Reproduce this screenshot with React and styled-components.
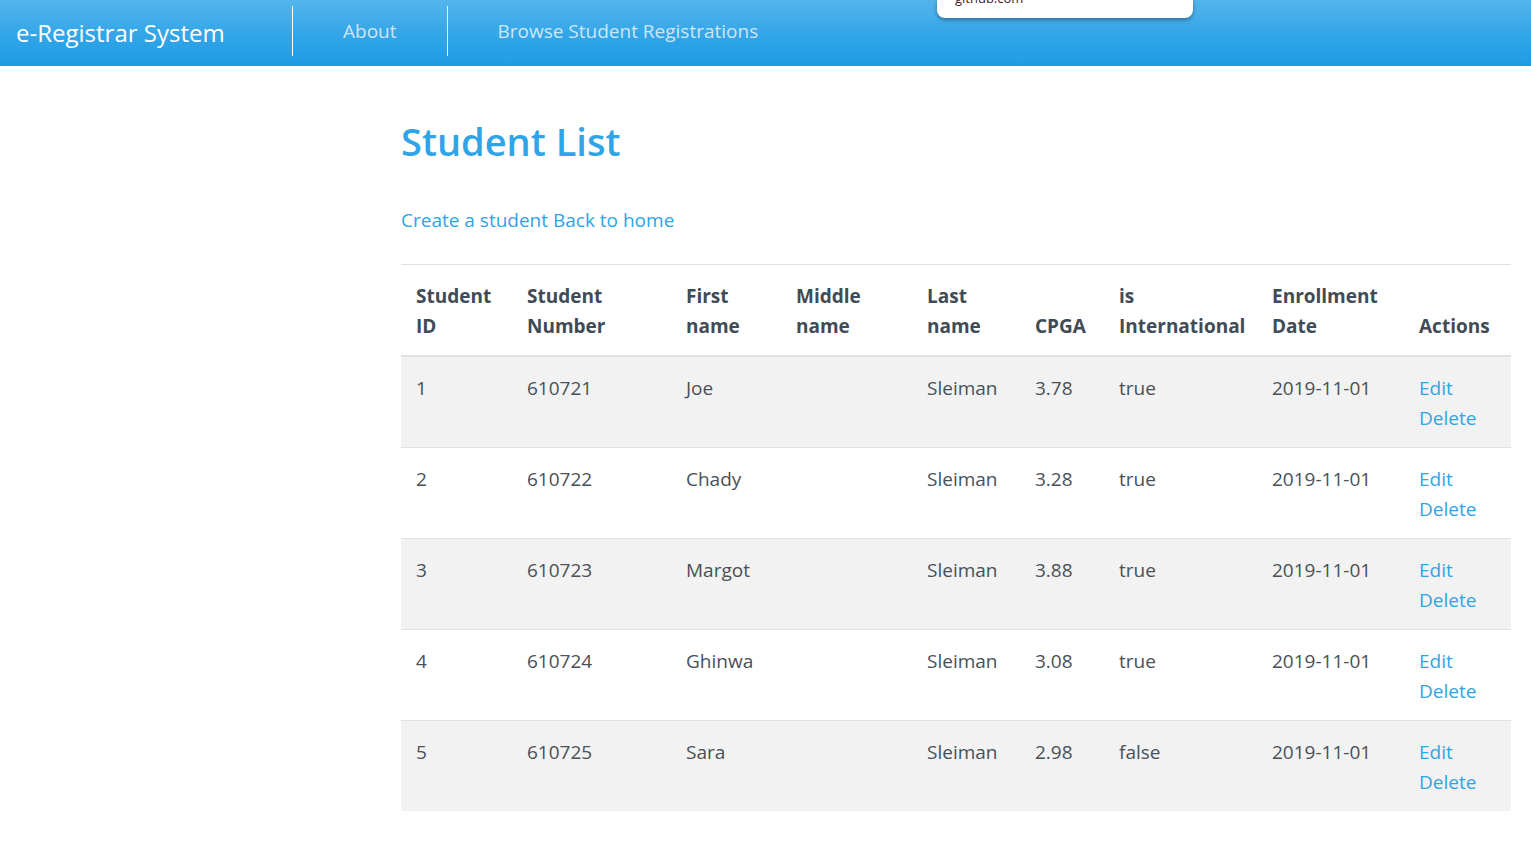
import React from 'react';
import styled, { createGlobalStyle } from 'styled-components';

const GlobalStyle = createGlobalStyle`
  body {
    margin: 0;
    font-family: "Segoe UI", "Open Sans", "Noto Sans", sans-serif;
    font-size: 19px;
    line-height: 30px;
    color: #495057;
    background: #fff;
  }
`;

const Navbar = styled.nav`
  position: relative;
  height: 66px;
  display: flex;
  align-items: flex-start;
  background-image: linear-gradient(#54b4eb, #2fa4e7 60%, #1d9ce5);
`;

const Brand = styled.a`
  box-sizing: border-box;
  width: 292px;
  height: 66px;
  padding-left: 16px;
  display: flex;
  align-items: center;
  color: #fff;
  font-size: 24px;
  text-decoration: none;
`;

const NavItem = styled.a`
  height: 50px;
  margin-top: 6px;
  padding: 0 50px;
  display: flex;
  align-items: center;
  border-left: 1px solid #fff;
  color: #cde6f8;
  font-size: 19px;
  text-decoration: none;
`;

const UrlTip = styled.div`
  position: absolute;
  top: 0;
  left: 937px;
  width: 256px;
  height: 18px;
  overflow: hidden;
  background: #fff;
  border-radius: 0 0 8px 8px;
  box-shadow: 0 2px 4px rgba(0, 0, 0, 0.35);
  font-family: "Segoe UI", "Open Sans", sans-serif;
  font-size: 13px;
  line-height: 13px;
  color: #3a1a2a;
  padding-left: 18px;
  box-sizing: border-box;
`;

const UrlText = styled.span`
  display: block;
  margin-top: -8px;
`;

const Main = styled.main`
  padding: 0 20px 40px 401px;
`;

const Title = styled.h1`
  margin: 51px 0 0;
  font-size: 38px;
  line-height: 48px;
  font-weight: 600;
  color: #2fa4e7;
`;

const LinkRow = styled.p`
  margin: 40px 0 0;
  font-size: 19px;
`;

const TextLink = styled.a`
  color: #2fa4e7;
  text-decoration: none;
  display: ${(p) => (p.block ? 'block' : 'inline')};
`;

const Table = styled.table`
  width: 100%;
  margin-top: 29px;
  border-collapse: collapse;
  table-layout: fixed;
`;

const Th = styled.th`
  padding: 16px 15px 14px;
  text-align: left;
  vertical-align: bottom;
  font-weight: 700;
  color: #404b56;
  border-top: 1px solid #dee2e6;
  border-bottom: 2px solid #dee2e6;
`;

const Row = styled.tr`
  background: ${(p) => (p.striped ? '#f2f2f2' : 'transparent')};
`;

const Td = styled.td`
  padding: 16px 15px 14px;
  vertical-align: top;
  border-top: ${(p) => (p.first ? 'none' : '1px solid #dee2e6')};
`;

const columns = [
  { label: 'Student ID', width: 111 },
  { label: 'Student Number', width: 159 },
  { label: 'First name', width: 110 },
  { label: 'Middle name', width: 131 },
  { label: 'Last name', width: 108 },
  { label: 'CPGA', width: 84 },
  { label: 'is International', width: 153 },
  { label: 'Enrollment Date', width: 147 },
  { label: 'Actions', width: 107 },
];

const students = [
  { id: 1, number: '610721', first: 'Joe', last: 'Sleiman', cpga: '3.78', intl: 'true' },
  { id: 2, number: '610722', first: 'Chady', last: 'Sleiman', cpga: '3.28', intl: 'true' },
  { id: 3, number: '610723', first: 'Margot', last: 'Sleiman', cpga: '3.88', intl: 'true' },
  { id: 4, number: '610724', first: 'Ghinwa', last: 'Sleiman', cpga: '3.08', intl: 'true' },
  { id: 5, number: '610725', first: 'Sara', last: 'Sleiman', cpga: '2.98', intl: 'false' },
];

const App = () => {
  return (
    <>
      <GlobalStyle />
      <Navbar>
        <Brand href="#">e-Registrar System</Brand>
        <NavItem href="#">About</NavItem>
        <NavItem href="#">Browse Student Registrations</NavItem>
        <UrlTip>
          <UrlText>github.com</UrlText>
        </UrlTip>
      </Navbar>
      <Main>
        <Title>Student List</Title>
        <LinkRow>
          <TextLink href="#">Create a student</TextLink>{' '}
          <TextLink href="#">Back to home</TextLink>
        </LinkRow>
        <Table>
          <colgroup>
            {columns.map((c) => (
              <col key={c.label} style={{ width: c.width }} />
            ))}
          </colgroup>
          <thead>
            <tr>
              {columns.map((c) => (
                <Th key={c.label}>{c.label}</Th>
              ))}
            </tr>
          </thead>
          <tbody>
            {students.map((s, i) => (
              <Row key={s.id} striped={i % 2 === 0}>
                <Td first={i === 0}>{s.id}</Td>
                <Td first={i === 0}>{s.number}</Td>
                <Td first={i === 0}>{s.first}</Td>
                <Td first={i === 0}></Td>
                <Td first={i === 0}>{s.last}</Td>
                <Td first={i === 0}>{s.cpga}</Td>
                <Td first={i === 0}>{s.intl}</Td>
                <Td first={i === 0}>2019-11-01</Td>
                <Td first={i === 0}>
                  <TextLink href="#" block>Edit</TextLink>
                  <TextLink href="#" block>Delete</TextLink>
                </Td>
              </Row>
            ))}
          </tbody>
        </Table>
      </Main>
    </>
  );
};

export default App;
